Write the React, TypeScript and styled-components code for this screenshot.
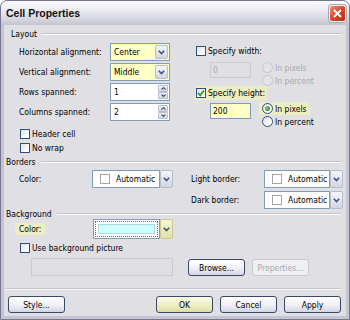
import React from 'react';
import styled, { createGlobalStyle, css } from 'styled-components';

const GlobalStyle = createGlobalStyle`
  html, body { margin: 0; padding: 0; background: #ffffff; }
  body {
    font-family: "DejaVu Sans Condensed", "Liberation Sans", sans-serif;
    font-size: 8.5px;
    color: #000;
  }
  * { box-sizing: border-box; }
`;

const Window = styled.div`
  width: 350px;
  height: 320px;
  display: flex;
  flex-direction: column;
  background: #c4c4d2;
  border: 1px solid #767690;
  border-radius: 7px 7px 0 0;
  padding: 0 3px 3px;
  overflow: hidden;
`;

const TitleBar = styled.div`
  height: 24px;
  margin: 0 -3px;
  padding: 0 3px 0 5px;
  display: flex;
  align-items: center;
  justify-content: space-between;
  background: linear-gradient(#fbfbfd 0%, #ececf2 35%, #d6d6e0 75%, #c4c4d2 100%);
`;

const Title = styled.span`
  font-family: "Liberation Sans", sans-serif;
  font-weight: bold;
  font-size: 10.5px;
  color: #111;
`;

const CloseButton = styled.span`
  width: 17px;
  height: 17px;
  border: 1px solid #f4f4f8;
  border-radius: 3px;
  background: linear-gradient(135deg, #f0907a 0%, #d8482a 50%, #b82a10 100%);
  display: flex;
  align-items: center;
  justify-content: center;
  box-shadow: 0 0 0 1px #a8a8b8;
`;

const Body = styled.div`
  flex: 1;
  background: #e0dfe3;
  padding: 3px 5px 3px 2px;
  display: flex;
  flex-direction: column;
`;

const SectionHeader = styled.div<{ $indent?: number; $mt?: number }>`
  height: 12px;
  display: flex;
  align-items: center;
  gap: 5px;
  padding-left: ${p => p.$indent ?? 0}px;
  margin-top: ${p => p.$mt ?? 0}px;
`;

const Rule = styled.div`
  flex: 1;
  height: 2px;
  border-top: 1px solid #c4c4cc;
  border-bottom: 1px solid #fbfbfd;
`;

const LayoutGrid = styled.div`
  display: grid;
  grid-template-columns: 151px 1fr;
  column-gap: 25px;
  padding-left: 13px;
`;

const Column = styled.div<{ $pt?: number; $gap?: number }>`
  display: flex;
  flex-direction: column;
  padding-top: ${p => p.$pt ?? 0}px;
  gap: ${p => p.$gap ?? 0}px;
`;

const FieldRow = styled.div<{ $h?: number }>`
  display: flex;
  align-items: center;
  height: ${p => p.$h ?? 18}px;
`;

const FieldLabel = styled.span<{ $w: number }>`
  width: ${p => p.$w}px;
  flex: none;
`;

const Select = styled.div<{ $w: number }>`
  display: flex;
  align-items: stretch;
  width: ${p => p.$w}px;
  height: 18px;
  border: 1px solid #7f9db9;
  background: #ffffc8;
  padding: 1px;
`;

const FieldText = styled.span`
  flex: 1;
  display: flex;
  align-items: center;
  padding-left: 2px;
`;

const DropButton = styled.span<{ $tone?: 'silver' | 'yellow' }>`
  width: 13px;
  flex: none;
  display: flex;
  align-items: center;
  justify-content: center;
  border: 1px solid ${p => (p.$tone === 'yellow' ? '#c9c98e' : '#b4bccd')};
  border-radius: 2px;
  background: ${p =>
    p.$tone === 'yellow'
      ? 'linear-gradient(#f6f6d6, #e0e0a8)'
      : 'linear-gradient(#f6f6fa, #d2d5e2)'};
`;

const SpinBox = styled.div<{ $w: number }>`
  display: flex;
  width: ${p => p.$w}px;
  height: 18px;
  border: 1px solid #7f9db9;
  background: #fff;
  padding: 1px;
`;

const Spinner = styled.div`
  width: 10px;
  display: flex;
  flex-direction: column;
  gap: 0;
`;

const SpinHalf = styled.span`
  flex: 1;
  display: flex;
  align-items: center;
  justify-content: center;
  border: 1px solid #b4bccd;
  border-radius: 1px;
  background: linear-gradient(#f6f6fa, #d2d5e2);
`;

const CheckList = styled.div<{ $mt?: number; $pl?: number }>`
  display: flex;
  flex-direction: column;
  margin-top: ${p => p.$mt ?? 0}px;
  padding-left: ${p => p.$pl ?? 0}px;
`;

const CheckRow = styled.label<{ $hl?: boolean; $mt?: number }>`
  display: flex;
  align-items: center;
  gap: 2px;
  height: 14px;
  width: fit-content;
  padding: 0 2px 0 1px;
  margin-top: ${p => p.$mt ?? 0}px;
  background: ${p => (p.$hl ? '#ededc2' : 'transparent')};
`;

const Box = styled.span<{ $checked?: boolean }>`
  width: 10px;
  height: 10px;
  flex: none;
  border: 1px solid #2f4e78;
  background: linear-gradient(135deg, #e2e2ea, #ffffff 80%);
  display: flex;
  align-items: center;
  justify-content: center;
`;

const SubBlock = styled.div<{ $mt?: number }>`
  display: flex;
  align-items: flex-start;
  padding-left: 15px;
  margin-top: ${p => p.$mt ?? 0}px;
  gap: 8px;
`;

const SmallInput = styled.div<{ $state: 'disabled' | 'yellow' }>`
  width: 41px;
  height: 16px;
  margin-top: 1px;
  display: flex;
  align-items: center;
  padding-left: 2px;
  ${p =>
    p.$state === 'disabled'
      ? css`
          border: 1px solid #c9c9d0;
          background: #e0dfe3;
          color: #a8a8b0;
        `
      : css`
          border: 1px solid #7f9db9;
          background: #ffffc8;
          color: #000;
        `}
`;

const RadioGroup = styled.div`
  display: flex;
  flex-direction: column;
`;

const RadioRow = styled.div<{ $hl?: boolean; $disabled?: boolean }>`
  display: flex;
  align-items: center;
  gap: 2px;
  height: 13px;
  width: fit-content;
  padding: 0 3px;
  background: ${p => (p.$hl ? '#ededc2' : 'transparent')};
  color: ${p => (p.$disabled ? '#a8a8b0' : '#000')};
`;

const RadioCircle = styled.span<{ $checked?: boolean; $disabled?: boolean }>`
  width: 11px;
  height: 11px;
  flex: none;
  border-radius: 50%;
  border: 1px solid ${p => (p.$disabled ? '#c4c4cc' : '#2f4e78')};
  background: ${p => (p.$disabled ? '#e4e4e8' : 'linear-gradient(135deg, #e0e0e8, #fff 80%)')};
  display: flex;
  align-items: center;
  justify-content: center;
  &::after {
    content: '';
    display: ${p => (p.$checked ? 'block' : 'none')};
    width: 5px;
    height: 5px;
    border-radius: 50%;
    background: radial-gradient(circle at 35% 35%, #7ad07a, #1f7a1f);
  }
`;

const BordersGrid = styled.div`
  display: grid;
  grid-template-columns: 154px 1fr;
  column-gap: 18px;
  padding-left: 13px;
  margin-top: 2px;
  margin-right: -2px;
`;

const ColorPicker = styled.div<{ $w: number; $h?: number }>`
  display: flex;
  width: ${p => p.$w}px;
  height: ${p => p.$h ?? 18}px;
`;

const ColorBox = styled.div`
  flex: 1;
  display: flex;
  align-items: center;
  border: 1px solid #7f9db9;
  background: #fff;
  padding-left: 7px;
  gap: 6px;
`;

const Swatch = styled.span`
  width: 10px;
  height: 10px;
  border: 1px solid #a4a4ac;
  background: #fff;
`;

const FocusBox = styled.div`
  flex: 1;
  border: 1px solid #7f9db9;
  background: #fff;
  padding: 1px;
  display: flex;
`;

const FocusRing = styled.div`
  flex: 1;
  border: 1px dotted #8a5a5a;
  padding: 2px;
  display: flex;
`;

const Fill = styled.div`
  flex: 1;
  background: #ccffff;
  border: 1px solid #b0d8dc;
`;

const BgRow = styled.div<{ $mt?: number }>`
  display: flex;
  align-items: center;
  height: 20px;
  padding-left: 9px;
  margin-top: ${p => p.$mt ?? 0}px;
`;

const LabelCell = styled.span<{ $w: number }>`
  width: ${p => p.$w}px;
  flex: none;
  display: flex;
`;

const Highlight = styled.span`
  background: #ededc2;
  padding: 1px 4px 1px 4px;
`;

const PictureRow = styled.div`
  display: flex;
  align-items: flex-end;
  height: 18px;
  margin-top: 3px;
  padding-left: 25px;
  gap: 7px;
`;

const DisabledField = styled.div`
  width: 142px;
  height: 18px;
  border: 1px solid #c9c9d0;
  background: #e0dfe3;
  margin-right: 8px;
`;

const Button = styled.button<{ $variant?: 'normal' | 'default' | 'disabled' }>`
  width: 57px;
  height: 17px;
  padding: 0;
  font: inherit;
  border-radius: 3px;
  display: flex;
  align-items: center;
  justify-content: center;
  ${p =>
    p.$variant === 'disabled'
      ? css`
          border: 1px solid #c8c8d0;
          background: #efeff2;
          color: #a8a8b0;
        `
      : p.$variant === 'default'
      ? css`
          border: 1px solid #3a4868;
          background: linear-gradient(#fbfbe6, #ececc0 60%, #dcdca6);
          color: #000;
        `
      : css`
          border: 1px solid #3a4868;
          background: linear-gradient(#ffffff, #f0f0f6 55%, #d2d4e2);
          color: #000;
        `}
`;

const Separator = styled.div`
  height: 2px;
  margin: 12px 0 0 -1px;
  border-top: 1px solid #c4c4cc;
  border-bottom: 1px solid #fbfbfd;
`;

const Footer = styled.div`
  display: flex;
  justify-content: space-between;
  margin-top: 6px;
  padding-left: 2px;
`;

const ButtonGroup = styled.div`
  display: flex;
  gap: 7px;
`;

const Chevron = () => (
  <svg width="7" height="5" viewBox="0 0 7 5">
    <path d="M0.8 0.8 L3.5 3.6 L6.2 0.8" fill="none" stroke="#3f557e" strokeWidth="1.6" />
  </svg>
);

const Arrow = ({ up }: { up?: boolean }) => (
  <svg width="5" height="3" viewBox="0 0 5 3">
    <path d={up ? 'M0.5 2.5 L2.5 0.5 L4.5 2.5' : 'M0.5 0.5 L2.5 2.5 L4.5 0.5'} fill="none" stroke="#3f557e" strokeWidth="1.1" />
  </svg>
);

const Check = () => (
  <svg width="8" height="8" viewBox="0 0 8 8">
    <path d="M1 4 L3.2 6.3 L7 1.5" fill="none" stroke="#21a121" strokeWidth="1.8" />
  </svg>
);

const CloseX = () => (
  <svg width="9" height="9" viewBox="0 0 9 9">
    <path d="M1 1 L8 8 M8 1 L1 8" stroke="#fff" strokeWidth="1.8" />
  </svg>
);

const SelectField = ({ value }: { value: string }) => (
  <Select $w={60}>
    <FieldText>{value}</FieldText>
    <DropButton><Chevron /></DropButton>
  </Select>
);

const SpinField = ({ value }: { value: string }) => (
  <SpinBox $w={60}>
    <FieldText>{value}</FieldText>
    <Spinner>
      <SpinHalf><Arrow up /></SpinHalf>
      <SpinHalf><Arrow /></SpinHalf>
    </Spinner>
  </SpinBox>
);

const Checkbox = ({ label, checked, hl, mt }: { label: string; checked?: boolean; hl?: boolean; mt?: number }) => (
  <CheckRow $hl={hl} $mt={mt}>
    <Box $checked={checked}>{checked && <Check />}</Box>
    <span>{label}</span>
  </CheckRow>
);

const Radio = ({ label, checked, hl, disabled }: { label: string; checked?: boolean; hl?: boolean; disabled?: boolean }) => (
  <RadioRow $hl={hl} $disabled={disabled}>
    <RadioCircle $checked={checked} $disabled={disabled} />
    <span>{label}</span>
  </RadioRow>
);

const AutoPicker = ({ w }: { w: number }) => (
  <ColorPicker $w={w}>
    <ColorBox>
      <Swatch />
      <span>Automatic</span>
    </ColorBox>
    <DropButton><Chevron /></DropButton>
  </ColorPicker>
);

export default function App() {
  return (
    <>
      <GlobalStyle />
      <Window>
        <TitleBar>
          <Title>Cell Properties</Title>
          <CloseButton><CloseX /></CloseButton>
        </TitleBar>
        <Body>
          <SectionHeader $indent={5}>
            <span>Layout</span>
            <Rule />
          </SectionHeader>
          <LayoutGrid>
            <Column $pt={3}>
              <Column $gap={2}>
                <FieldRow>
                  <FieldLabel $w={91}>Horizontal alignment:</FieldLabel>
                  <SelectField value="Center" />
                </FieldRow>
                <FieldRow>
                  <FieldLabel $w={91}>Vertical alignment:</FieldLabel>
                  <SelectField value="Middle" />
                </FieldRow>
                <FieldRow>
                  <FieldLabel $w={91}>Rows spanned:</FieldLabel>
                  <SpinField value="1" />
                </FieldRow>
                <FieldRow>
                  <FieldLabel $w={91}>Columns spanned:</FieldLabel>
                  <SpinField value="2" />
                </FieldRow>
              </Column>
              <CheckList $mt={6}>
                <Checkbox label="Header cell" />
                <Checkbox label="No wrap" />
              </CheckList>
            </Column>
            <Column $pt={4}>
              <Checkbox label="Specify width:" />
              <SubBlock $mt={3}>
                <SmallInput $state="disabled">0</SmallInput>
                <RadioGroup>
                  <Radio label="In pixels" disabled />
                  <Radio label="In percent" disabled />
                </RadioGroup>
              </SubBlock>
              <Checkbox label="Specify height:" checked hl mt={-1} />
              <SubBlock $mt={2}>
                <SmallInput $state="yellow">200</SmallInput>
                <RadioGroup>
                  <Radio label="In pixels" checked hl />
                  <Radio label="In percent" />
                </RadioGroup>
              </SubBlock>
            </Column>
          </LayoutGrid>

          <SectionHeader $mt={1}>
            <span>Borders</span>
            <Rule />
          </SectionHeader>
          <BordersGrid>
            <Column>
              <FieldRow>
                <FieldLabel $w={73}>Color:</FieldLabel>
                <AutoPicker w={81} />
              </FieldRow>
            </Column>
            <Column $gap={3}>
              <FieldRow>
                <FieldLabel $w={73}>Light border:</FieldLabel>
                <AutoPicker w={79} />
              </FieldRow>
              <FieldRow>
                <FieldLabel $w={73}>Dark border:</FieldLabel>
                <AutoPicker w={79} />
              </FieldRow>
            </Column>
          </BordersGrid>

          <SectionHeader $mt={-1}>
            <span>Background</span>
            <Rule />
          </SectionHeader>
          <BgRow $mt={-1}>
            <LabelCell $w={78}>
              <Highlight>Color:</Highlight>
            </LabelCell>
            <ColorPicker $w={80} $h={20}>
              <FocusBox>
                <FocusRing>
                  <Fill />
                </FocusRing>
              </FocusBox>
              <DropButton $tone="yellow"><Chevron /></DropButton>
            </ColorPicker>
          </BgRow>
          <CheckList $mt={2} $pl={13}>
            <Checkbox label="Use background picture" />
          </CheckList>
          <PictureRow>
            <DisabledField />
            <Button>Browse...</Button>
            <Button $variant="disabled">Properties...</Button>
          </PictureRow>
          <Separator />
          <Footer>
            <Button>Style...</Button>
            <ButtonGroup>
              <Button $variant="default">OK</Button>
              <Button>Cancel</Button>
              <Button>Apply</Button>
            </ButtonGroup>
          </Footer>
        </Body>
      </Window>
    </>
  );
}
